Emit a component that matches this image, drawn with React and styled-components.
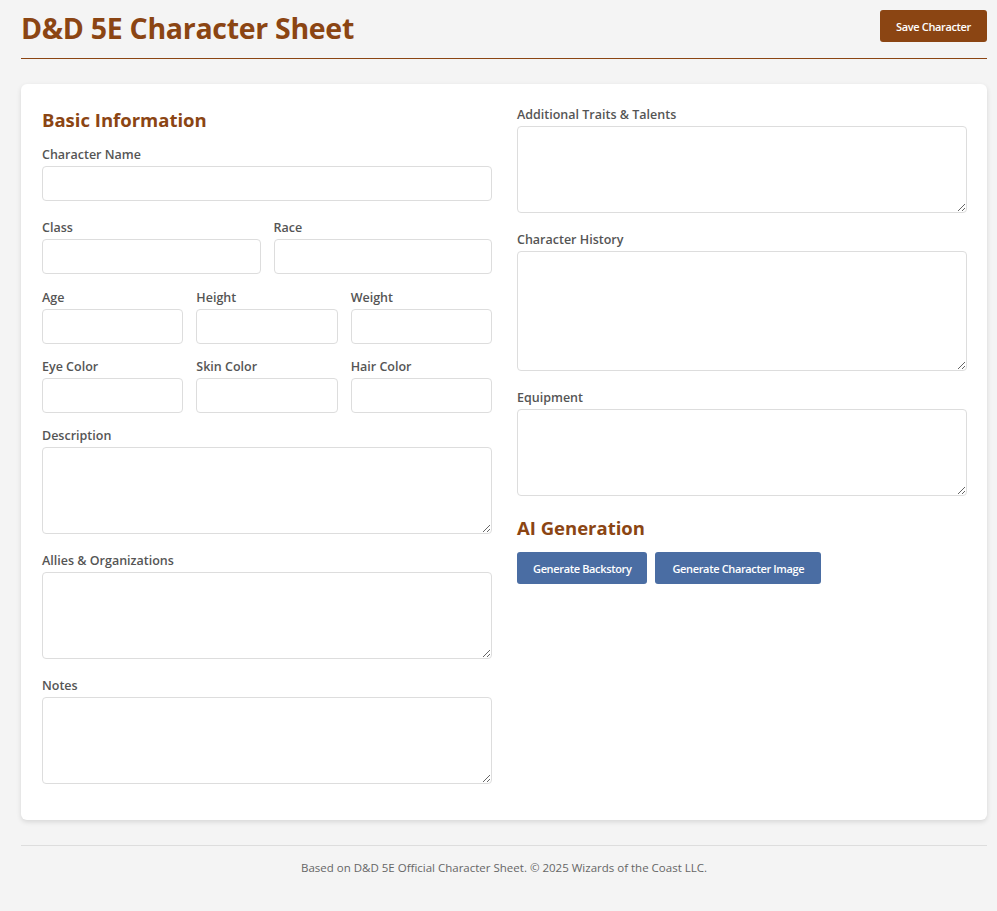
import React from 'react';
import styled, { createGlobalStyle } from 'styled-components';

const GlobalStyle = createGlobalStyle`
  html, body {
    margin: 0;
    padding: 0;
    background-color: #f4f4f4;
    font-family: "Open Sans", "Noto Sans", sans-serif;
    color: #333;
  }
  * {
    box-sizing: border-box;
  }
`;

const Page = styled.div`
  padding: 10px 10px 0 21px;
`;

const Header = styled.header`
  display: flex;
  justify-content: space-between;
  align-items: flex-start;
  padding-bottom: 12px;
  border-bottom: 1px solid #8b4513;
  margin-bottom: 25px;
`;

const Title = styled.h1`
  margin: 0;
  font-size: 28.5px;
  line-height: 36px;
  font-weight: 700;
  color: #8b4513;
  letter-spacing: -0.3px;
`;

const Button = styled.button`
  height: 32px;
  padding: 0 ${p => (p.$wide ? '17px' : '16px')};
  border: none;
  border-radius: 3px;
  background-color: ${p => p.$color || '#8b4513'};
  color: #fff;
  font-family: inherit;
  font-size: 11px;
  font-weight: 600;
  letter-spacing: -0.35px;
  cursor: pointer;
`;

const Card = styled.main`
  background-color: #fff;
  border-radius: 6px;
  box-shadow: 0 2px 5px rgba(0, 0, 0, 0.12);
  padding: 19px 20px 21px 21px;
  display: grid;
  grid-template-columns: 1fr 1fr;
  column-gap: 25px;
`;

const Column = styled.section`
  display: flex;
  flex-direction: column;
`;

const SectionTitle = styled.h2`
  margin: ${p => p.$top || '5px'} 0 ${p => p.$bottom || '11px'};
  font-size: 18.5px;
  line-height: 24px;
  font-weight: 700;
  color: #8b4513;
`;

const Group = styled.div`
  display: flex;
  flex-direction: column;
  margin-bottom: ${p => (p.$tight ? '0' : '15px')};
  min-width: 0;
`;

const Label = styled.label`
  font-size: 12.5px;
  line-height: 18px;
  padding-top: 3px;
  font-weight: 600;
  color: #555;
  margin-bottom: 2px;
`;

const Input = styled.input`
  width: 100%;
  height: 35px;
  border: 1px solid #ddd;
  border-radius: 4px;
  padding: 8px;
  font-family: inherit;
  font-size: 14px;
`;

const TextArea = styled.textarea`
  width: 100%;
  height: ${p => p.$h || 87}px;
  border: 1px solid #ddd;
  border-radius: 4px;
  padding: 8px;
  font-family: inherit;
  font-size: 14px;
  resize: vertical;
`;

const Row = styled.div`
  display: grid;
  grid-template-columns: repeat(${p => p.$cols}, 1fr);
  column-gap: 13px;
  margin-bottom: ${p => p.$gap || 11}px;
`;

const ButtonRow = styled.div`
  display: flex;
  gap: 8px;
`;

const Footer = styled.footer`
  margin: 25px 0 0;
  border-top: 1px solid #ddd;
  padding: 14px 0 30px;
  text-align: center;
  font-size: 11.5px;
  line-height: 16px;
  color: #666;
`;

function Field({ label, area, h, tight }) {
  return (
    <Group $tight={tight}>
      <Label>{label}</Label>
      {area ? <TextArea $h={h} /> : <Input type="text" />}
    </Group>
  );
}

export default function App() {
  return (
    <>
      <GlobalStyle />
      <Page>
        <Header>
          <Title>D&amp;D 5E Character Sheet</Title>
          <Button>Save Character</Button>
        </Header>

        <Card>
          <Column>
            <SectionTitle>Basic Information</SectionTitle>
            <Field label="Character Name" />
            <Row $cols={2} $gap={12}>
              <Field label="Class" tight />
              <Field label="Race" tight />
            </Row>
            <Row $cols={3}>
              <Field label="Age" tight />
              <Field label="Height" tight />
              <Field label="Weight" tight />
            </Row>
            <Row $cols={3}>
              <Field label="Eye Color" tight />
              <Field label="Skin Color" tight />
              <Field label="Hair Color" tight />
            </Row>
            <Field label="Description" area />
            <Field label="Allies & Organizations" area />
            <Field label="Notes" area />
          </Column>

          <Column>
            <Field label="Additional Traits & Talents" area />
            <Field label="Character History" area h={120} />
            <Field label="Equipment" area />
            <SectionTitle $bottom="12px">AI Generation</SectionTitle>
            <ButtonRow>
              <Button $color="#4a6da3">Generate Backstory</Button>
              <Button $color="#4a6da3" $wide>Generate Character Image</Button>
            </ButtonRow>
          </Column>
        </Card>

        <Footer>
          Based on D&amp;D 5E Official Character Sheet. © 2025 Wizards of the Coast LLC.
        </Footer>
      </Page>
    </>
  );
}
